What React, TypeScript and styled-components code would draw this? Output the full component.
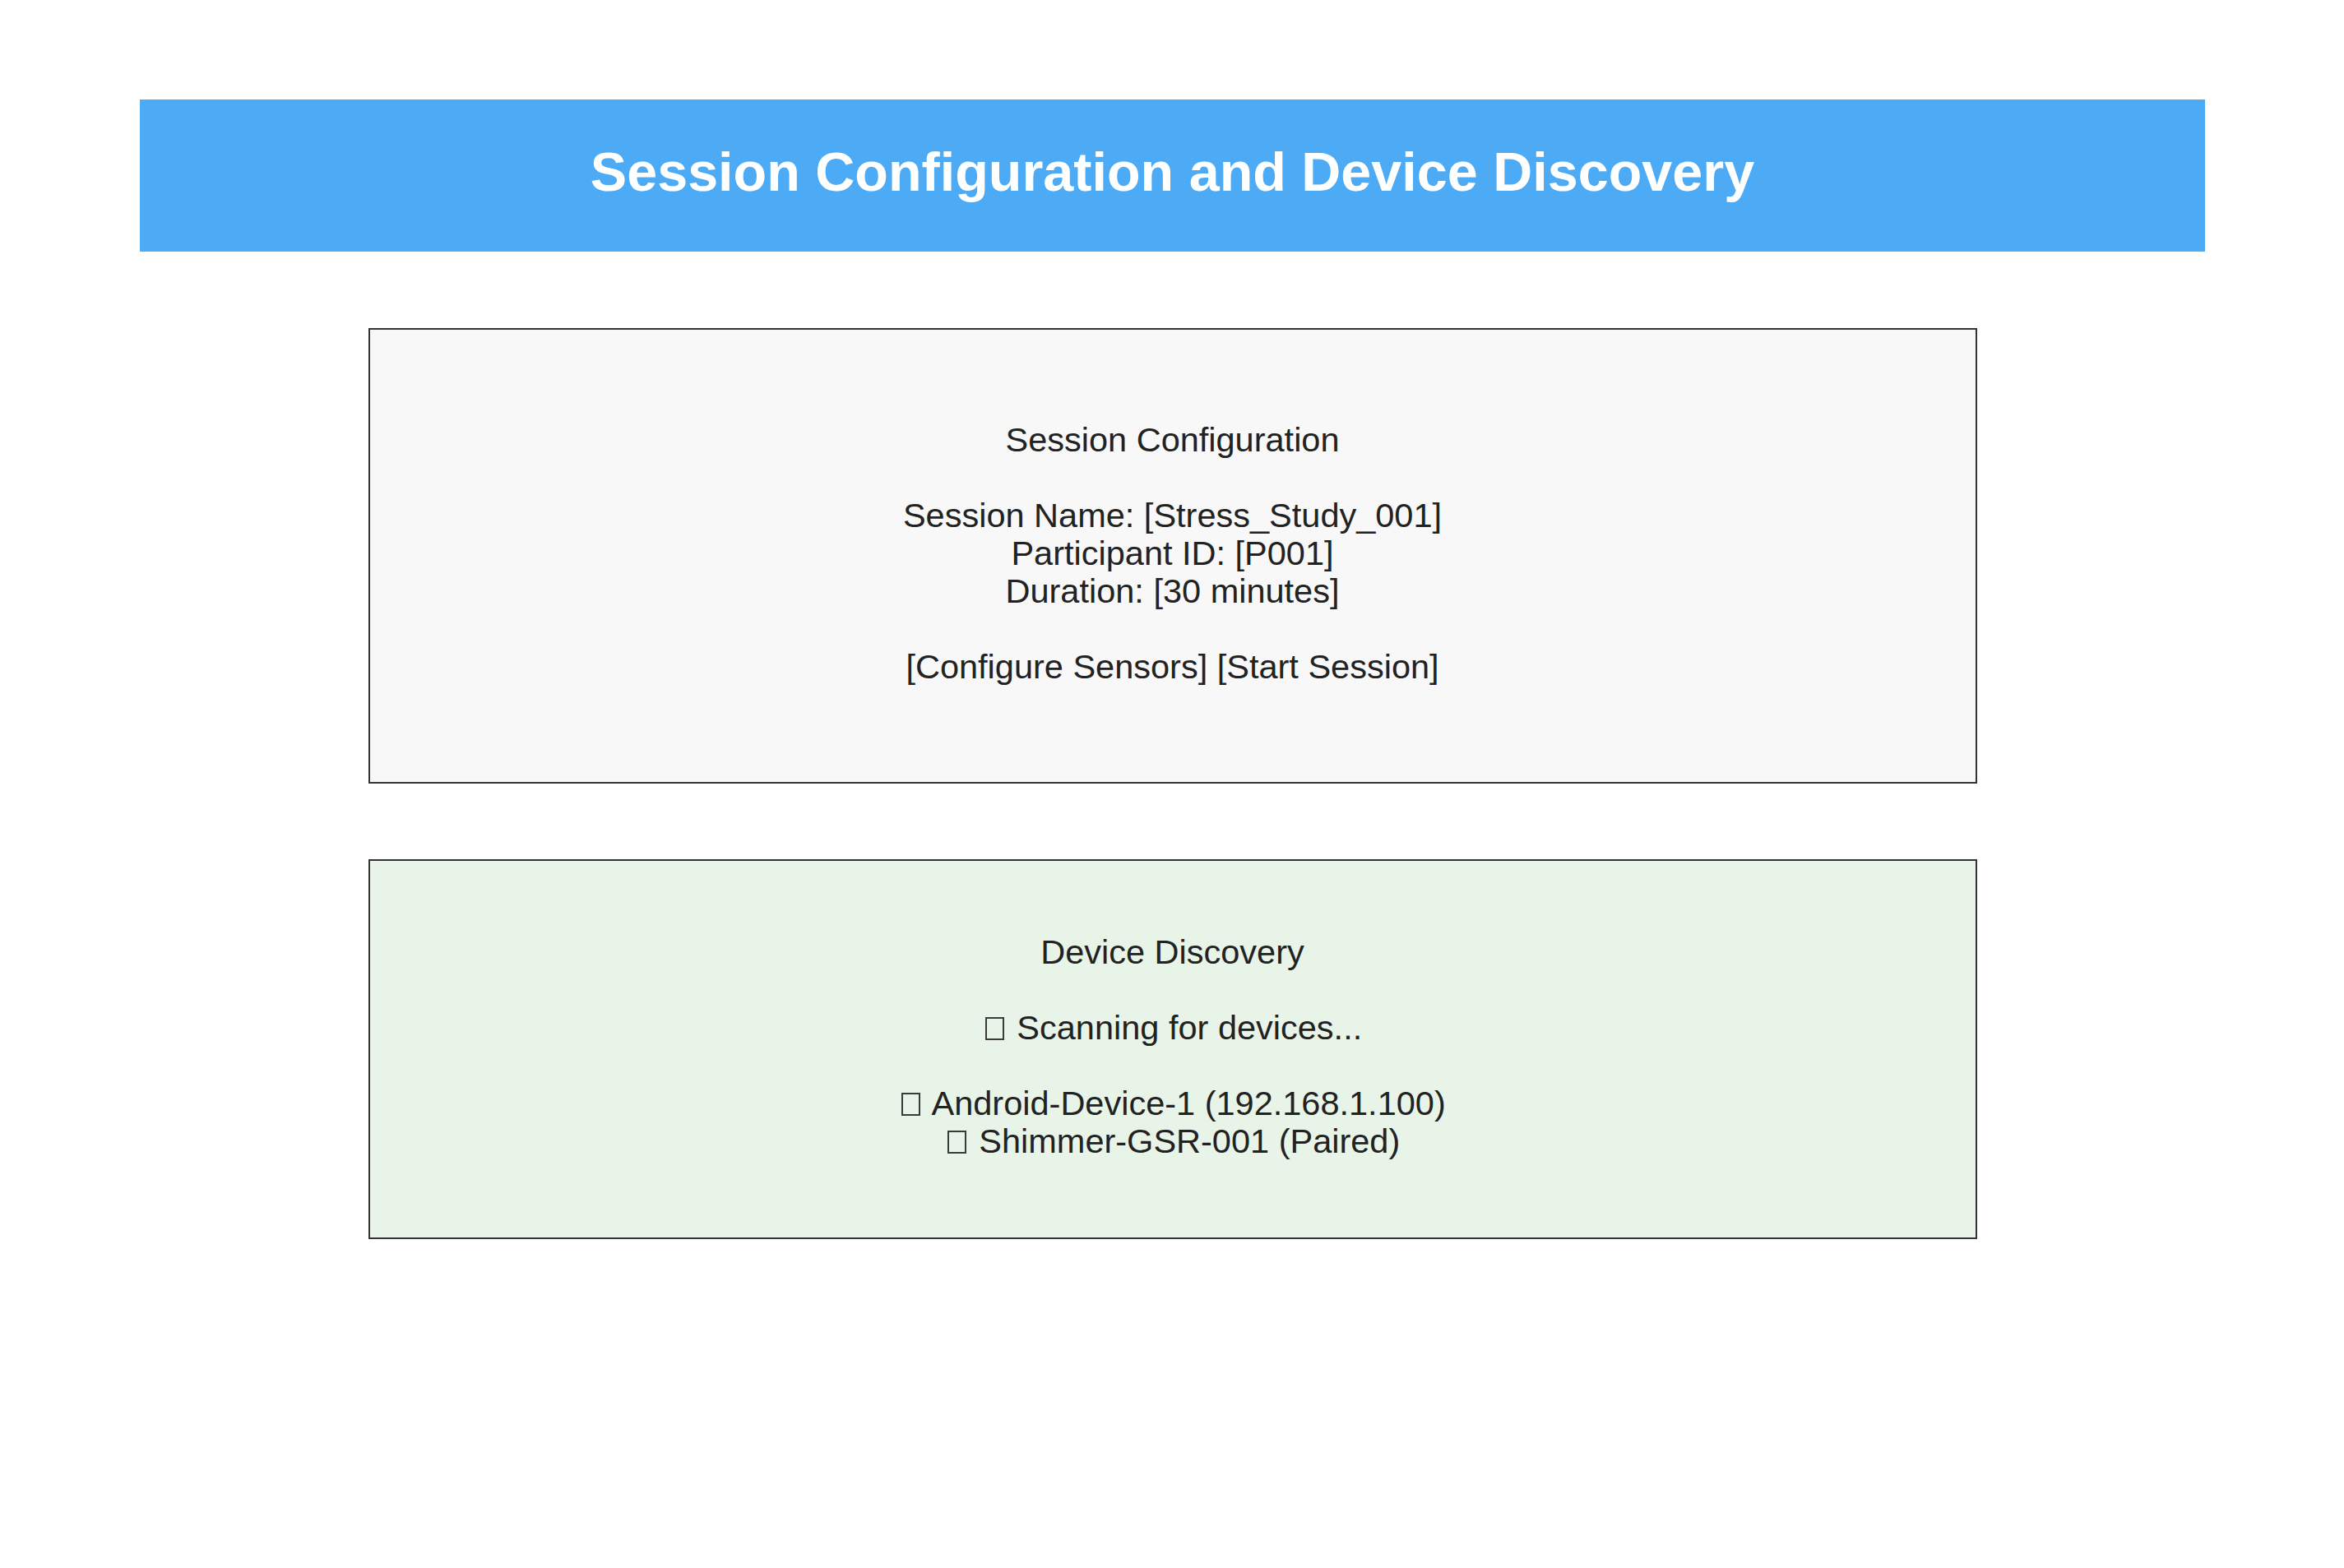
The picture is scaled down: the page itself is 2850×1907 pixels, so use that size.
import React from "react";
import styled, { createGlobalStyle } from "styled-components";

const GlobalStyle = createGlobalStyle`
  html, body {
    margin: 0;
    padding: 0;
    background: #ffffff;
    font-family: "Liberation Sans", Arial, sans-serif;
  }
`;

const Page = styled.div`
  width: 2850px;
  min-height: 1907px;
  box-sizing: border-box;
  padding: 121px 169px 0 170px;
  display: flex;
  flex-direction: column;
  align-items: center;
  gap: 93px;
`;

const Header = styled.header`
  align-self: stretch;
  height: 185px;
  background: #4dabf5;
  display: flex;
  align-items: center;
  justify-content: center;
`;

const Title = styled.h1`
  margin: 0;
  padding-bottom: 9px;
  color: #ffffff;
  font-family: "Liberation Sans", Arial, sans-serif;
  font-weight: 700;
  font-size: 66.5px;
  line-height: 1;
`;

const Stack = styled.div`
  display: flex;
  flex-direction: column;
  gap: 92px;
`;

const Panel = styled.section<{ $bg: string; $h: number }>`
  width: 1956px;
  height: ${(p) => p.$h}px;
  box-sizing: border-box;
  border: 2px solid #333333;
  padding-bottom: 7px;
  background: ${(p) => p.$bg};
  display: flex;
  flex-direction: column;
  align-items: center;
  justify-content: center;
  color: #222222;
  font-family: "Liberation Sans", Arial, sans-serif;
  font-size: 41.5px;
  line-height: 46px;
  text-align: center;
`;

const Line = styled.div`
  height: 46px;
  white-space: pre;
`;

const Tofu = styled.span`
  display: inline-block;
  width: 23px;
  height: 28px;
  box-sizing: border-box;
  border: 2px solid #3a3a3a;
  vertical-align: -1px;
  margin: 0 4px 0 3px;
`;

const Blank = () => <Line />;

export default function App() {
  return (
    <>
      <GlobalStyle />
      <Page>
        <Header>
          <Title>Session Configuration and Device Discovery</Title>
        </Header>
        <Stack>
          <Panel $bg="#f8f8f8" $h={554}>
            <Line>Session Configuration</Line>
            <Blank />
            <Line>Session Name: [Stress_Study_001]</Line>
            <Line>Participant ID: [P001]</Line>
            <Line>Duration: [30 minutes]</Line>
            <Blank />
            <Line>[Configure Sensors] [Start Session]</Line>
          </Panel>
          <Panel $bg="#e8f4e8" $h={462}>
            <Line>Device Discovery</Line>
            <Blank />
            <Line>
              <Tofu /> Scanning for devices...
            </Line>
            <Blank />
            <Line>
              <Tofu /> Android-Device-1 (192.168.1.100)
            </Line>
            <Line>
              <Tofu /> Shimmer-GSR-001 (Paired)
            </Line>
          </Panel>
        </Stack>
      </Page>
    </>
  );
}
